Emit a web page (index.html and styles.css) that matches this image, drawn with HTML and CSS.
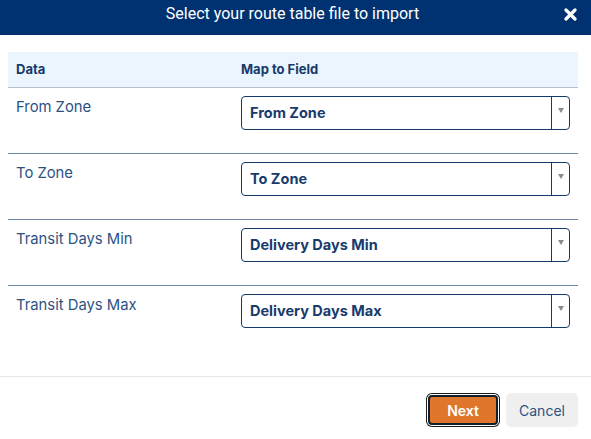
FILE: index.html
```html
<!DOCTYPE html>
<html>
<head>
<meta charset="utf-8">
<link rel="stylesheet" href="styles.css">
</head>
<body>
<div class="modal">
  <div class="modal-header">
    <div class="modal-title">Select your route table file to import</div>
    <button class="close" aria-label="Close">
      <svg width="13" height="13" viewBox="0 0 13 13"><path d="M2 2 L11 11 M11 2 L2 11" stroke="#fff" stroke-width="3.2" stroke-linecap="round"/></svg>
    </button>
  </div>
  <div class="modal-body">
    <table class="map-table">
      <thead>
        <tr><th class="col-data">Data</th><th>Map to Field</th></tr>
      </thead>
      <tbody>
        <tr>
          <td class="data-cell">From Zone</td>
          <td><div class="select"><span class="select-value">From Zone</span><span class="select-arrow"><i></i></span></div></td>
        </tr>
        <tr>
          <td class="data-cell">To Zone</td>
          <td><div class="select"><span class="select-value">To Zone</span><span class="select-arrow"><i></i></span></div></td>
        </tr>
        <tr>
          <td class="data-cell">Transit Days Min</td>
          <td><div class="select"><span class="select-value">Delivery Days Min</span><span class="select-arrow"><i></i></span></div></td>
        </tr>
        <tr class="last">
          <td class="data-cell">Transit Days Max</td>
          <td><div class="select"><span class="select-value">Delivery Days Max</span><span class="select-arrow"><i></i></span></div></td>
        </tr>
      </tbody>
    </table>
  </div>
  <div class="modal-footer">
    <button class="btn btn-primary">Next</button>
    <button class="btn btn-secondary">Cancel</button>
  </div>
</div>
</body>
</html>
```

FILE: styles.css
```css
html, body {
  margin: 0;
  padding: 0;
  background: #fff;
}
body {
  font-family: Inter, "Noto Sans", sans-serif;
  width: 591px;
  height: 439px;
  overflow: hidden;
}
.modal {
  display: flex;
  flex-direction: column;
  height: 439px;
}
.modal-header {
  height: 35px;
  flex: none;
  background: #003271;
  display: flex;
  align-items: flex-start;
}
.modal-title {
  flex: 1;
  padding-left: 66px;
  text-align: center;
  color: #fff;
  font-family: Roboto, "Liberation Sans", sans-serif;
  font-size: 16px;
  line-height: 28px;
}
.close {
  width: 72px;
  height: 28px;
  margin: 0;
  border: 0;
  background: transparent;
  display: flex;
  align-items: center;
  justify-content: flex-end;
  padding: 0 14px 0 0;
  box-sizing: border-box;
}
.modal-body {
  flex: none;
  padding: 17px 13px 0 8px;
  height: 342px;
  box-sizing: border-box;
  border-bottom: 1px solid #e6e6e6;
}
.map-table {
  width: 570px;
  border-collapse: collapse;
  table-layout: fixed;
}
.map-table th {
  background: #ebf5fd;
  color: #163a6b;
  font-size: 13px;
  font-weight: 700;
  text-align: left;
  height: 35px;
  padding: 0 8px;
  border-bottom: 1px solid #b5bfcd;
  box-sizing: border-box;
}
.map-table th.col-data {
  width: 225px;
}
.map-table td {
  padding: 8px 8px 23px 8px;
  vertical-align: top;
  border-bottom: 1px solid #6b86a8;
}
.map-table tr.last td {
  border-bottom: 0;
}
.data-cell {
  color: #2b5283;
  font-size: 14.8px;
  line-height: 22px;
}
.select {
  height: 34px;
  box-sizing: border-box;
  border: 1px solid #14396b;
  border-radius: 4px;
  display: flex;
  align-items: center;
}
.select-value {
  flex: 1;
  padding-left: 8px;
  color: #183b6d;
  font-weight: 700;
  font-size: 14.5px;
}
.select-arrow {
  width: 18px;
  height: 32px;
  border-left: 1px solid #14396b;
  display: flex;
  justify-content: center;
  padding-top: 11px;
  box-sizing: border-box;
}
.select-arrow i {
  display: block;
  width: 0;
  height: 0;
  border-left: 3.5px solid transparent;
  border-right: 3.5px solid transparent;
  border-top: 5px solid #8a8a8a;
}
.modal-footer {
  display: flex;
  justify-content: flex-end;
  gap: 6px;
  padding: 16px 13px 0 0;
}
.btn {
  font-family: Inter, "Noto Sans", sans-serif;
  font-size: 14px;
  height: 34px;
  border-radius: 5px;
  cursor: pointer;
  box-sizing: border-box;
}
.btn-primary {
  width: 70px;
  height: 30px;
  margin: 2px;
  background: #e0762c;
  color: #fff;
  font-weight: 600;
  border: 2px solid #0f1f2e;
  border-radius: 4px;
  box-shadow: 0 0 0 1px #fff, 0 0 0 2px #1a1a1a;
}
.btn-secondary {
  width: 72px;
  background: #efefef;
  color: #2b5283;
  border: 0;
}
```
